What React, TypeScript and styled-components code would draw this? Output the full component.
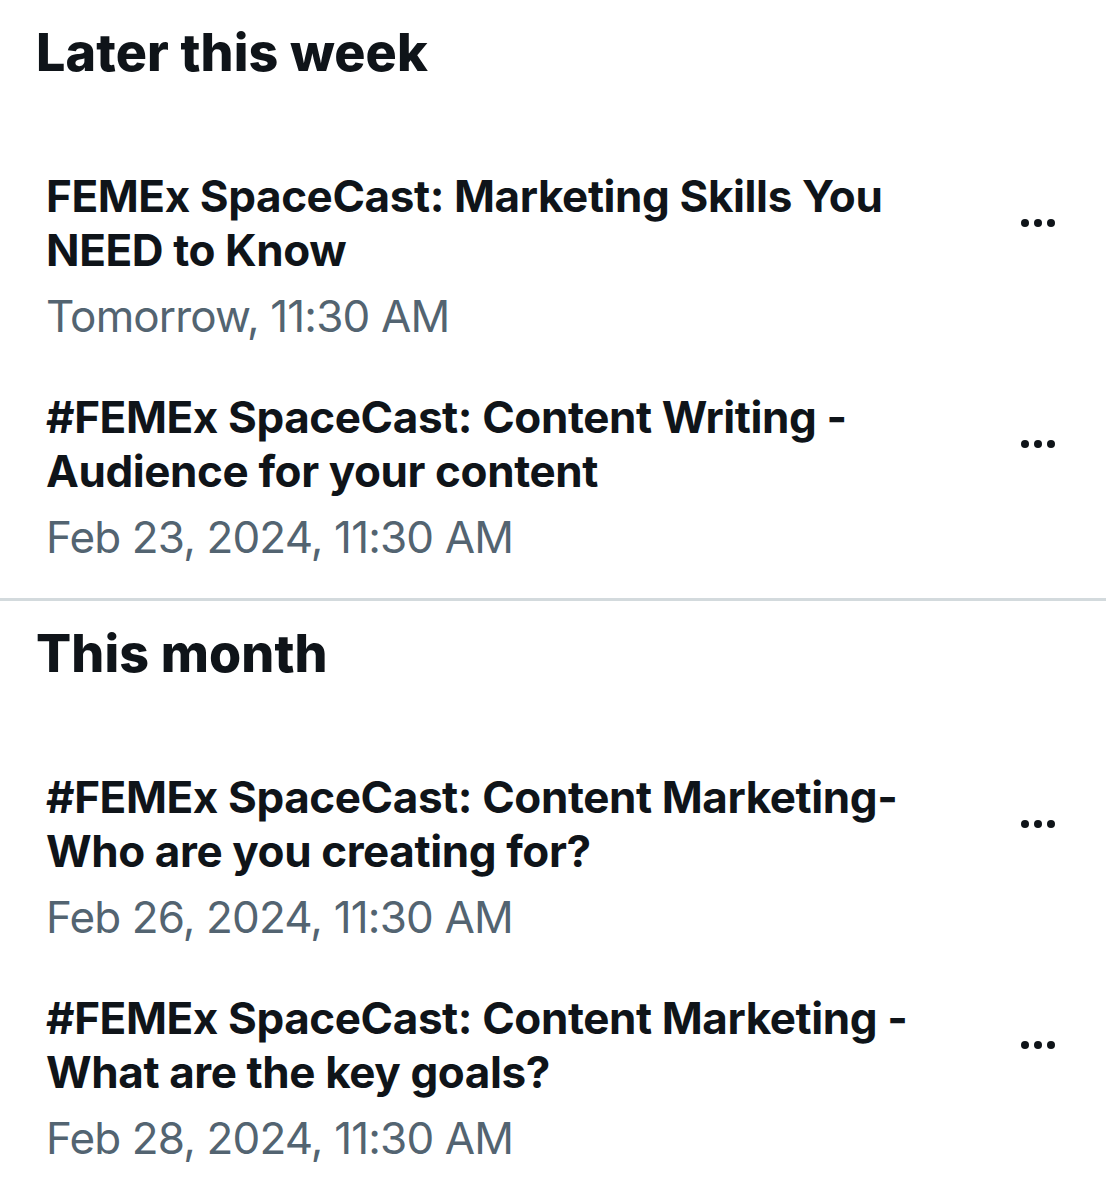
import styled, { createGlobalStyle } from "styled-components"

const GlobalStyle = createGlobalStyle`
  html, body {
    margin: 0;
    padding: 0;
    background: #ffffff;
  }
  body {
    font-family: "Inter", "Noto Sans", "Liberation Sans", sans-serif;
    color: #0f1419;
    -webkit-font-smoothing: antialiased;
  }
`

const Page = styled.div`
  width: 1106px;
  min-height: 1200px;
  background: #ffffff;
  overflow: hidden;
`

const Section = styled.section`
  padding: 21px 0 9px;
`

const Heading = styled.h2`
  margin: 0 0 62px;
  padding-left: 36px;
  font-size: 52px;
  line-height: 64px;
  font-weight: 800;
  letter-spacing: 0.1px;
  color: #0f1419;
`

const Divider = styled.hr`
  margin: 0;
  border: 0;
  height: 3px;
  background: #d3dadd;
`

const Item = styled.div`
  padding: 22px 51px 22px 46px;
`

const TitleRow = styled.div`
  display: flex;
  align-items: center;
  gap: 40px;
`

const Title = styled.div`
  flex: 1;
  font-size: 44px;
  line-height: 54px;
  font-weight: 700;
  letter-spacing: -0.4px;
  color: #0f1419;
`

const When = styled.div`
  margin-top: 9px;
  font-size: 44px;
  line-height: 60px;
  font-weight: 400;
  letter-spacing: -0.85px;
  color: #536471;
`

const MoreButton = styled.button`
  display: flex;
  align-items: center;
  gap: 5px;
  padding: 0;
  border: 0;
  background: none;
  cursor: pointer;
`

const Dot = styled.span`
  width: 8px;
  height: 8px;
  border-radius: 50%;
  background: #0f1419;
`

type Space = { title: string; when: string }

const groups: { label: string; spaces: Space[] }[] = [
  {
    label: "Later this week",
    spaces: [
      { title: "FEMEx SpaceCast: Marketing Skills You NEED to Know", when: "Tomorrow, 11:30 AM" },
      { title: "#FEMEx SpaceCast: Content Writing - Audience for your content", when: "Feb 23, 2024, 11:30 AM" },
    ],
  },
  {
    label: "This month",
    spaces: [
      { title: "#FEMEx SpaceCast: Content Marketing- Who are you creating for?", when: "Feb 26, 2024, 11:30 AM" },
      { title: "#FEMEx SpaceCast: Content Marketing - What are the key goals?", when: "Feb 28, 2024, 11:30 AM" },
    ],
  },
]

function SpaceItem({ space }: { space: Space }) {
  return (
    <Item>
      <TitleRow>
        <Title>{space.title}</Title>
        <MoreButton aria-label="More">
          <Dot />
          <Dot />
          <Dot />
        </MoreButton>
      </TitleRow>
      <When>{space.when}</When>
    </Item>
  )
}

export default function App() {
  return (
    <Page>
      <GlobalStyle />
      {groups.map((group, i) => (
        <div key={group.label}>
          {i > 0 && <Divider />}
          <Section>
            <Heading>{group.label}</Heading>
            {group.spaces.map((space) => (
              <SpaceItem key={space.title} space={space} />
            ))}
          </Section>
        </div>
      ))}
    </Page>
  )
}
